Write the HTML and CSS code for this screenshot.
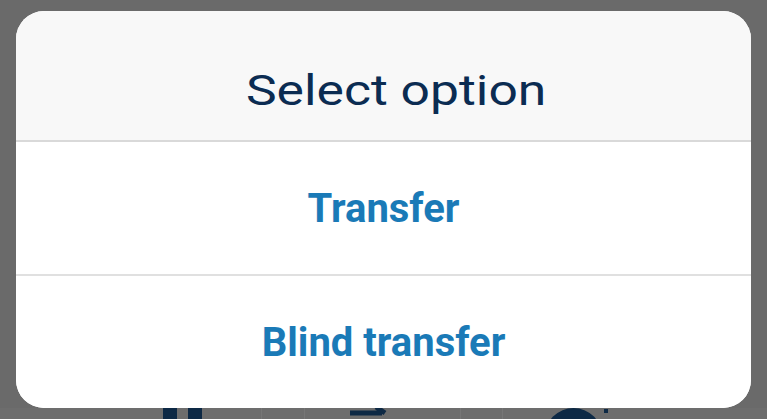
FILE: index.html
```html
<!DOCTYPE html>
<html lang="en">
<head>
    <meta charset="UTF-8">
    <meta name="viewport" content="width=device-width, initial-scale=1.0">
    <title>Select option</title>
    <link rel="stylesheet" href="styles.css">
</head>
<body>
    <div class="dialog">
        <div class="dialog-header">
            <h1 class="dialog-title">Select option</h1>
        </div>
        <button class="option">Transfer</button>
        <button class="option">Blind transfer</button>
    </div>

    <!-- call toolbar, dimmed behind the dialog -->
    <div class="toolbar">
        <div class="tool tool-hold"><span class="pause-bar"></span><span class="pause-bar"></span></div>
        <div class="tool tool-transfer">
            <svg width="42" height="14" viewBox="0 0 42 14"><path d="M1 5h32M27 -1l9 6" stroke="#0d2945" stroke-width="5" fill="none"/></svg>
        </div>
        <div class="tool tool-record"><span class="dot-icon"></span><span class="rec-dot"></span></div>
    </div>
</body>
</html>
```

FILE: styles.css
```css
body {
    margin: 0;
    height: 419px;
    overflow: hidden;
    background: #6a6a6a;
    font-family: Roboto, 'Noto Sans', sans-serif;
}
.dialog {
    margin: 11px 16px 0 16px;
    width: 735px;
    height: 397px;
    background: white;
    border-radius: 28px;
    overflow: hidden;
    display: flex;
    flex-direction: column;
}
.dialog-header {
    background: #f8f8f8;
    height: 129px;
    border-bottom: 2px solid #d9d9d9;
    box-sizing: content-box;
    display: flex;
    justify-content: center;
}
.dialog-title {
    margin: 54px 0 0 25px;
    font-size: 43px;
    font-weight: 400;
    color: #0b2c52;
    transform: scaleX(1.2);
    height: 50px;
}
.option {
    height: 132px;
    border: none;
    background: white;
    font-family: inherit;
    font-size: 40px;
    font-weight: 700;
    color: #1a7ab7;
    padding: 0;
}
.option + .option {
    border-top: 2px solid #e0e0e0;
    box-sizing: content-box;
}
.toolbar {
    display: flex;
    height: 20px;
    background: #6d6d6d;
}
.tool {
    display: flex;
    gap: 11px;
    height: 20px;
    overflow: hidden;
}
.tool-hold {
    width: 262px;
    padding-left: 163px;
    box-sizing: border-box;
    border-right: 1px solid #767676;
}
.tool-transfer {
    margin-left: 42px;
    width: 157px;
    padding-left: 44px;
    box-sizing: border-box;
    border-left: 1px solid #767676;
    border-right: 1px solid #767676;
}
.tool-record {
    margin-left: 41px;
    flex: 1;
    padding-left: 42px;
    border-left: 1px solid #767676;
    gap: 2px;
}
.pause-bar {
    width: 14px;
    height: 20px;
    background: #0d2945;
}
.dot-icon {
    width: 57px;
    height: 57px;
    flex-shrink: 0;
    border-radius: 50%;
    background: #0d2945;
}
.rec-dot {
    width: 4px;
    height: 4px;
    margin-top: 1px;
    background: #0d2945;
}
```
